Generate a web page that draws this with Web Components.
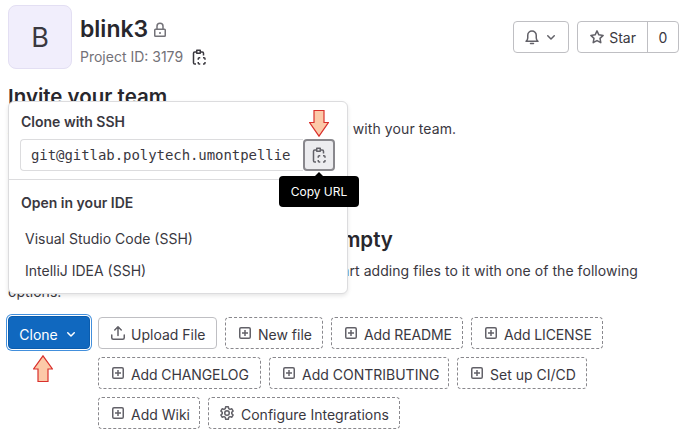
<!DOCTYPE html>
<html><head><meta charset="utf-8">
<style>
html,body{margin:0;padding:0;background:#fff;height:438px;overflow:hidden}
body{font-family:Inter,"Noto Sans",sans-serif;font-size:14px;color:#3a383f}
</style></head><body>
<project-page></project-page>
<script>
const I={
 clip:'<path d="M5 3H3.75a1.25 1.25 0 0 0-1.25 1.25v9.5A1.25 1.25 0 0 0 3.75 15H5M10 3h1.25a1.25 1.25 0 0 1 1.25 1.25V6.5M5.75 1.25h3.5v3h-3.5z" fill="none" stroke="currentColor" stroke-width="1.5" stroke-linejoin="round"/><path d="M7.25 10.75V9.75a1 1 0 0 1 1-1h1M12 8.75h1a1 1 0 0 1 1 1v1M14 13v1a1 1 0 0 1-1 1h-1M9.25 15h-1a1 1 0 0 1-1-1v-1" fill="none" stroke="currentColor" stroke-width="1.5"/>',
 lock:'<path d="M5 7.5V4.25a3 3 0 0 1 6 0V7.5" fill="none" stroke="currentColor" stroke-width="1.5"/><rect x="2.75" y="7.25" width="10.5" height="7" rx=".75" fill="none" stroke="currentColor" stroke-width="1.5"/><rect x="7.25" y="10" width="1.5" height="2" fill="currentColor"/>',
 bell:'<path d="M2 12.25c1.2-.8 1.75-1.7 1.75-3.25V6.25a4.25 4.25 0 0 1 8.5 0V9c0 1.55.55 2.45 1.75 3.25z" fill="none" stroke="currentColor" stroke-width="1.5" stroke-linejoin="round"/><path d="M6.5 14.5h3" stroke="currentColor" stroke-width="1.5" stroke-linecap="round"/>',
 chev:'<path d="M4.22 6.22a.75.75 0 0 1 1.06 0L8 8.94l2.72-2.72a.75.75 0 1 1 1.06 1.06l-3.25 3.25a.75.75 0 0 1-1.06 0L4.22 7.28a.75.75 0 0 1 0-1.06z" fill="currentColor"/>',
 star:'<path d="M8 1.9l1.85 3.95 4.3.55-3.15 3 .8 4.3L8 11.6l-3.8 2.1.8-4.3-3.15-3 4.3-.55z" fill="none" stroke="currentColor" stroke-width="1.5" stroke-linejoin="round"/>',
 upload:'<path d="M8 10.5V2M4.75 5L8 1.75 11.25 5" fill="none" stroke="currentColor" stroke-width="1.5" stroke-linecap="round" stroke-linejoin="round"/><path d="M1.75 10v2.75a1.5 1.5 0 0 0 1.5 1.5h9.5a1.5 1.5 0 0 0 1.5-1.5V10" fill="none" stroke="currentColor" stroke-width="1.5" stroke-linecap="round"/>',
 plus:'<rect x="2.75" y="2.75" width="10.5" height="10.5" rx="1.25" fill="none" stroke="currentColor" stroke-width="1.5"/><path d="M8 5v6M5 8h6" stroke="currentColor" stroke-width="1.5"/>',
 gear:'<path d="M6.7 1.75h2.6l.4 1.9 1.3.75 1.85-.6 1.3 2.25-1.45 1.35v1.2l1.45 1.35-1.3 2.25-1.85-.6-1.3.75-.4 1.9H6.7l-.4-1.9-1.3-.75-1.85.6-1.3-2.25L3.3 8.6V7.4L1.85 6.05l1.3-2.25 1.85.6 1.3-.75z" fill="none" stroke="currentColor" stroke-width="1.5" stroke-linejoin="round"/><circle cx="8" cy="8" r="2.25" fill="none" stroke="currentColor" stroke-width="1.5"/>'
};
customElements.define('gl-icon',class extends HTMLElement{connectedCallback(){
 const s=this.getAttribute('size')||16;
 this.attachShadow({mode:'open'}).innerHTML=`<style>:host{display:inline-flex;flex:none;width:${s}px;height:${s}px}svg{display:block}</style><svg width="${s}" height="${s}" viewBox="0 0 16 16">${I[this.getAttribute('name')]}</svg>`;
}});
customElements.define('gl-btn',class extends HTMLElement{connectedCallback(){
 const icon=this.getAttribute('icon');
 this.attachShadow({mode:'open'}).innerHTML=`<style>
 :host{display:inline-flex;align-items:center;height:32px;box-sizing:border-box;padding:0 0 0 11px;gap:5px;border:1px solid #bfbfc3;border-radius:4px;color:#3a383f;background:#fff;white-space:nowrap;overflow:hidden}
 :host([dashed]){border:1px dashed #89888d}
 gl-icon{color:#626168}
 gl-icon[name=gear]{margin:0 1px 0 -1px}
 span{position:relative;top:1px}
 </style>${icon?`<gl-icon name="${icon}"></gl-icon>`:''}<span><slot></slot></span>`;
}});
customElements.define('clone-dropdown',class extends HTMLElement{connectedCallback(){
 this.attachShadow({mode:'open'}).innerHTML=`<style>
 :host{position:absolute;left:8px;top:101px;width:339.5px;height:193px;box-sizing:border-box;background:#fff;border:1px solid #dcdcde;border-radius:6px;box-shadow:0 2px 4px rgba(0,0,0,.1);display:block;z-index:2;padding:11px 12px 0}
 .t{font-weight:600;line-height:18px;color:#3a383f}
 .row{display:flex;margin:8px 0 0 -1px;height:32px}
 .in{width:283px;box-sizing:border-box;border:1px solid #dcdcde;border-right:0;border-radius:4px 0 0 4px;font:14px/30px "DejaVu Sans Mono",monospace;letter-spacing:-.06px;padding-left:10px;overflow:hidden;white-space:nowrap;color:#3a383f}
 .b{width:32px;box-sizing:border-box;border:2px solid #89888d;border-radius:4px;background:#ececef;display:flex;align-items:center;justify-content:center;color:#626168}
 hr{border:0;border-top:1px solid #dcdcde;margin:8px -12px 0}
 .o{margin-top:14px}
 .i{margin:0 0 0 4px;line-height:32px}
 .i.a{margin-top:11px}
 </style>
 <div class="t">Clone with SSH</div>
 <div class="row"><div class="in">git@gitlab.polytech.umontpellie</div><div class="b"><gl-icon name="clip"></gl-icon></div></div>
 <hr><div class="t o">Open in your IDE</div>
 <div class="i a">Visual Studio Code (SSH)</div><div class="i">IntelliJ IDEA (SSH)</div>`;
}});
customElements.define('copy-tip',class extends HTMLElement{connectedCallback(){
 this.attachShadow({mode:'open'}).innerHTML=`<style>
 :host{position:absolute;left:279px;top:176px;width:80px;height:31px;background:#000;color:#fff;border-radius:4px;font-size:12px;display:flex;align-items:center;justify-content:center;z-index:3}
 :host::before{content:"";position:absolute;left:36px;top:-4px;border:4px solid transparent;border-top:0;border-bottom-color:#000}
 </style><slot></slot>`;
}});
customElements.define('mark-arrow',class extends HTMLElement{connectedCallback(){
 this.attachShadow({mode:'open'}).innerHTML=`<style>:host{position:absolute;display:block;width:20px;height:27px;z-index:4}svg{display:block}</style>
 <svg width="20" height="27" viewBox="0 0 20 27"><path d="${this.hasAttribute('up')?'M10 .8L19.4 14H15V26.5H5V14H.6z':'M5 .5H15V12.5H19.4L10 26.2.6 12.5H5z'}" fill="#fcc9a8" stroke="#d9302c" stroke-width="1.2"/></svg>`;
}});
customElements.define('project-page',class extends HTMLElement{connectedCallback(){
 this.attachShadow({mode:'open'}).innerHTML=`<style>
 :host{display:block;position:relative;box-sizing:border-box;width:685px;height:438px;overflow:hidden;padding:5px 6px 0 8px}
 .head{display:flex;align-items:flex-start;height:64px}
 .av{width:64px;height:64px;box-sizing:border-box;border:1px solid #e3dff3;border-radius:8px;background:#f1eefc;display:flex;align-items:center;justify-content:center;font-size:27px;color:#3a383f;flex:none}
 .ti{margin-left:8px;padding-top:8px}
 h1{margin:0;font-size:23px;line-height:32px;font-weight:600;color:#28272d;display:flex;align-items:center;gap:0}
 h1 gl-icon{color:#737278;margin-left:4px;position:relative;top:1px}
 .id{color:#737278;display:flex;align-items:center;line-height:20px;margin-top:2px}
 .id gl-icon{color:#3a383f;margin-left:8px}
 .act{margin-left:auto;margin-top:16px;display:flex;gap:8px}
 .act .bell{width:56px;height:32px;box-sizing:border-box;border:1px solid #bfbfc3;border-radius:4px;display:flex;align-items:center;justify-content:center;gap:3px;color:#626168}
 .star{display:flex;height:32px;box-sizing:border-box;border:1px solid #bfbfc3;border-radius:4px;align-items:center}
 .star span{display:flex;align-items:center;gap:4px;height:100%;padding:0 11px 0 11px;color:#3a383f}
 .star gl-icon{color:#626168}
 .star b{font-weight:400;border-left:1px solid #bfbfc3;width:30px;height:100%;display:flex;align-items:center;justify-content:center}
 h2{margin:0;font-size:20.5px;line-height:26px;font-weight:600;color:#28272d}
 .inv{margin-top:15px}
 p{margin:0;line-height:21px;color:#3a383f}
 .inv p{margin-top:8px;letter-spacing:.02px}
 .inv p span{letter-spacing:.1px}
 p a{color:#1068bf}
 .emp{margin-top:88px}
 .emp p{margin-top:7px;width:640px;letter-spacing:.05px}
 .btns{display:flex;margin-top:15px;gap:8px;align-items:flex-start}
 .clone{width:82px;height:33px;margin-top:-1px;padding-top:3px;flex:none;box-sizing:border-box;background:#1068bf;border:1px solid #0b5cad;border-radius:4px;color:#fff;display:flex;align-items:center;justify-content:center;gap:5px;box-shadow:0 0 0 1px #fff,0 0 0 2px #428fdc}
 .wrap{display:flex;flex-wrap:wrap;gap:8px;width:505px}
 </style>
 <header class="head">
  <div class="av">B</div>
  <div class="ti"><h1>blink3<gl-icon name="lock"></gl-icon></h1><div class="id">Project ID: 3179<gl-icon name="clip"></gl-icon></div></div>
  <div class="act"><div class="bell"><gl-icon name="bell"></gl-icon><gl-icon name="chev"></gl-icon></div>
  <div class="star"><span><gl-icon name="star"></gl-icon>Star</span><b>0</b></div></div>
 </header>
 <section class="inv"><h2>Invite your team</h2><p>Add members to this project and start <a href="#">collaborating</a> <span>with your team.</span></p></section>
 <section class="emp"><h2>The repository for this project is empty</h2><p>You can get started by cloning the repository or start adding files to it with one of the following options.</p></section>
 <div class="btns"><div class="clone">Clone <gl-icon name="chev"></gl-icon></div>
 <div class="wrap">
  <gl-btn style="width:119px" icon="upload">Upload File</gl-btn><gl-btn style="width:98px" dashed icon="plus">New file</gl-btn><gl-btn style="width:132px;letter-spacing:-.12px" dashed icon="plus">Add README</gl-btn><gl-btn style="width:132px;letter-spacing:-.12px" dashed icon="plus">Add LICENSE</gl-btn>
  <gl-btn style="width:163px;letter-spacing:-.1px" dashed icon="plus">Add CHANGELOG</gl-btn><gl-btn style="width:180px" dashed icon="plus">Add CONTRIBUTING</gl-btn><gl-btn style="width:130px" dashed icon="plus">Set up CI/CD</gl-btn>
  <gl-btn style="width:102px" dashed icon="plus">Add Wiki</gl-btn><gl-btn style="width:192px" dashed icon="gear">Configure Integrations</gl-btn>
 </div></div>
 <clone-dropdown></clone-dropdown>
 <copy-tip>Copy URL</copy-tip>
 <mark-arrow style="left:309px;top:110px"></mark-arrow>
 <mark-arrow up style="left:33px;top:355px"></mark-arrow>`;
}});
</script>
</body></html>
